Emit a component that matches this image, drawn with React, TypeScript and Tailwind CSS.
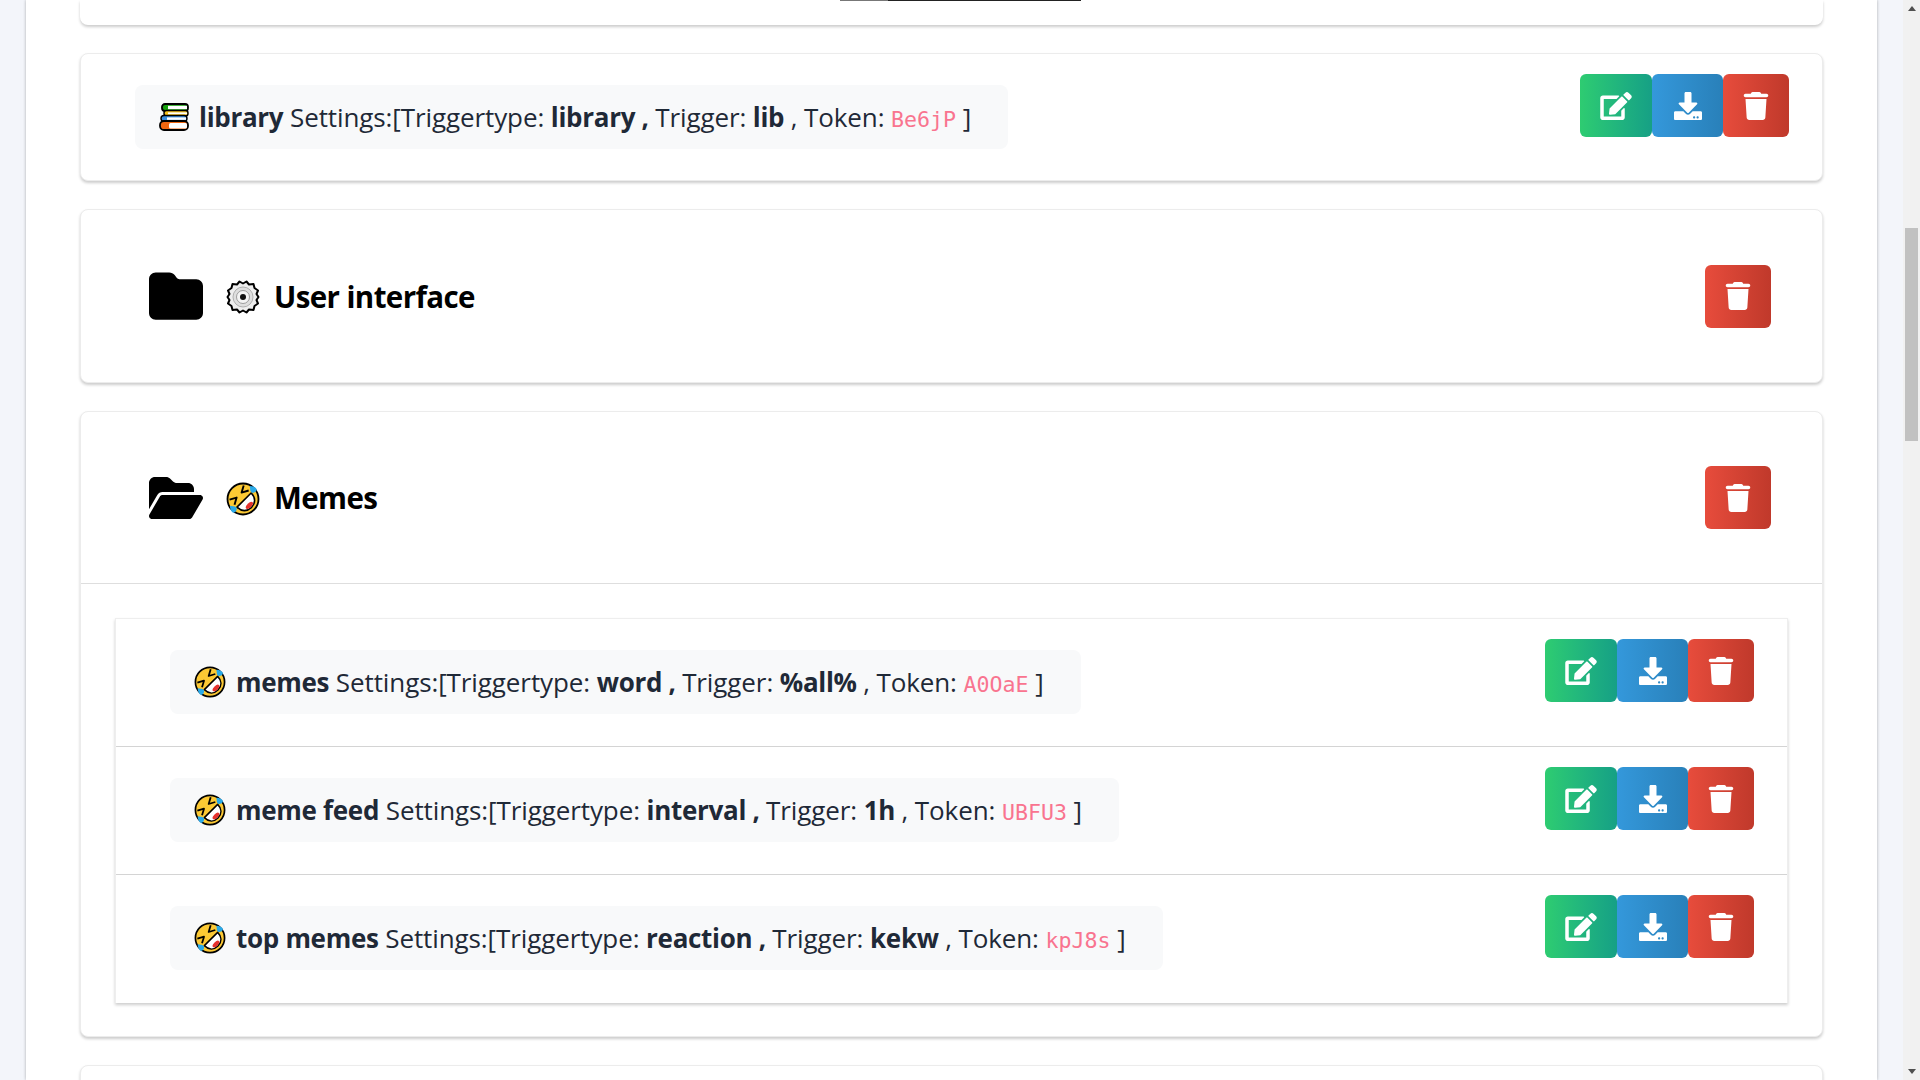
import type { ReactNode } from 'react';
import { FaDownload, FaEdit } from 'react-icons/fa';
import { FaFolder, FaFolderOpen, FaTrash } from 'react-icons/fa6';

function BooksEmoji() {
  return (
    <svg viewBox="0 0 30 28" className="w-[30px] h-[28px] shrink-0">
      <rect x="3" y="1" width="26" height="7" rx="3" fill="#16a30e" stroke="#000" strokeWidth="1.8" />
      <rect x="9" y="2.8" width="19" height="3.4" fill="#fff" />
      <rect x="5" y="7.5" width="24" height="5.5" rx="2.5" fill="#f6c21c" stroke="#000" strokeWidth="1.4" />
      <rect x="9" y="9.4" width="19" height="1.8" fill="#fff" />
      <rect x="2" y="12.5" width="26" height="6" rx="3" fill="#3a8fe0" stroke="#000" strokeWidth="1.4" />
      <rect x="8" y="14.4" width="19" height="2.4" fill="#fff" />
      <rect x="1" y="18" width="28" height="9" rx="4" fill="#f2660f" stroke="#000" strokeWidth="1.8" />
      <rect x="10" y="20" width="18" height="5.4" rx="1.5" fill="#fff" />
    </svg>
  );
}

function GearEmoji() {
  return (
    <svg viewBox="0 0 34 34" className="w-[34px] h-[34px] shrink-0">
      <path
        d="M13.5 1.5 17 3.5 20.5 1.5 23 4.5 27.5 4 28.5 8 32 10.5 30.5 14 32.5 17 30.5 20 32 23.5 28.5 26 27.5 30 23 29.5 20.5 32.5 17 30.5 13.5 32.5 11 29.5 6.5 30 5.5 26 2 23.5 3.5 20 1.5 17 3.5 14 2 10.5 5.5 8 6.5 4 11 4.5Z"
        fill="#eeeeee"
        stroke="#000"
        strokeWidth="2"
        strokeLinejoin="round"
      />
      <circle cx="17" cy="17" r="10" fill="#dedede" stroke="#b0b0b0" strokeWidth="1" />
      <circle cx="17" cy="17" r="6.5" fill="#f4f4f4" stroke="#8a8a8a" strokeWidth="0.8" />
      <circle cx="17" cy="17" r="3" fill="#111" />
    </svg>
  );
}

function RoflEmoji({ small }: { small?: boolean }) {
  return (
    <svg viewBox="0 0 34 34" className={small ? 'w-[32px] h-[32px] shrink-0' : 'w-[34px] h-[34px] shrink-0'}>
      <g transform="rotate(-45 17 17)">
        <circle cx="17" cy="17" r="15.5" fill="#fcc934" stroke="#000" strokeWidth="1.8" />
        <path d="M7 8 13.5 11.5 7 15" fill="none" stroke="#000" strokeWidth="1.9" strokeLinejoin="round" />
        <path d="M27 8 20.5 11.5 27 15" fill="none" stroke="#000" strokeWidth="1.9" strokeLinejoin="round" />
        <path d="M7 18.5H27C27 25 23 29 17 29S7 25 7 18.5Z" fill="#fff" stroke="#000" strokeWidth="1.6" strokeLinejoin="round" />
        <ellipse cx="17" cy="26" rx="4.5" ry="2.2" fill="#e5322d" />
        <path d="M31 12.5C33.5 15 34.5 18 33.5 20 31.5 21.5 28 20.5 27.7 18 27.5 16 30 14.5 31 12.5Z" fill="#29a9e8" />
        <path d="M3 12.5C0.5 15-0.5 18 0.5 20 2.5 21.5 6 20.5 6.3 18 6.5 16 4 14.5 3 12.5Z" fill="#29a9e8" />
      </g>
    </svg>
  );
}

function ActionButton({ kind }: { kind: 'edit' | 'download' | 'delete' }) {
  if (kind === 'edit') {
    return (
      <button className="flex h-[63px] w-[72px] items-center justify-center rounded-md bg-gradient-to-r from-[#2ecc71] to-[#16a085] text-[28px] text-white">
        <FaEdit className="w-[32px] h-[28px]" />
      </button>
    );
  }
  if (kind === 'download') {
    return (
      <button className="flex h-[63px] w-[71px] items-center justify-center rounded-md bg-gradient-to-r from-[#3498db] to-[#2980b9] text-[28px] text-white">
        <FaDownload />
      </button>
    );
  }
  return (
    <button className="flex h-[63px] w-[66px] items-center justify-center rounded-md bg-gradient-to-r from-[#e74c3c] to-[#c0392b] text-[28px] text-white">
      <FaTrash />
    </button>
  );
}

type Trigger = {
  icon: ReactNode;
  name: string;
  type: string;
  trigger: string;
  token: string;
};

function TriggerRow({ item, divider, single }: { item: Trigger; divider?: boolean; single?: boolean }) {
  return (
    <div className={`flex items-start justify-between pl-[54px] pr-[33px] pt-[20px] ${single ? 'h-[126px]' : 'h-[128px]'} ${divider ? 'border-b border-[#d4d4d4]' : ''}`}>
      <div className="mt-[11px] flex h-[64px] items-center rounded-lg bg-[#f8f9fa] pl-[24px] pr-[37px] text-[26px] tracking-[-0.1px] text-[#1f2937] whitespace-pre">
        {item.icon}
        <span className="ml-[10px]">
          <span className="font-bold tracking-[-0.3px]">{item.name}</span>
          <span> Settings:[Triggertype: </span>
          <span className="font-bold tracking-[-0.3px]">{item.type} , </span>
          <span>Trigger: </span>
          <span className="font-bold tracking-[-0.3px]">{item.trigger} </span>
          <span>, Token: </span>
          <code className="font-['DejaVu_Sans_Mono',monospace] text-[21.6px] tracking-normal text-[#f9748f]">{item.token}</code>
          <span> ]</span>
        </span>
      </div>
      <div className="flex">
        <ActionButton kind="edit" />
        <ActionButton kind="download" />
        <ActionButton kind="delete" />
      </div>
    </div>
  );
}

function FolderHeader({ open, icon, title, divider }: { open?: boolean; icon: ReactNode; title: string; divider?: boolean }) {
  return (
    <div className={`flex h-[172px] items-center justify-between pl-[68px] pr-[51px] ${divider ? 'border-b border-[#dedede]' : ''}`}>
      <div className="flex items-center">
        <span className="w-[54px] text-[54px] leading-none text-black">
          {open ? <FaFolderOpen className="w-[54px] h-[54px]" /> : <FaFolder />}
        </span>
        <span className="ml-[23px] mt-[2px]">{icon}</span>
        <span className="ml-[14px] mt-[2px] text-[29.5px] font-bold tracking-[-0.6px] text-black">{title}</span>
      </div>
      <ActionButton kind="delete" />
    </div>
  );
}

const card = 'rounded-lg border border-[#ececec] bg-white shadow-[0_2px_3px_rgba(0,0,0,0.2)]';

export default function App() {
  return (
    <div className="flex h-screen overflow-hidden bg-[#f3f5fa] font-['Open_Sans',sans-serif]">
      <div className="ml-[26px] h-full w-[1851px] shrink-0 bg-white px-[54px] shadow-[0_0_3px_rgba(0,0,0,0.3)]">
        <div className="relative mb-[28px] h-[25px] rounded-b-lg bg-white shadow-[0_2px_3px_rgba(0,0,0,0.2)]">
          <div className="absolute left-[760px] top-0 flex h-px w-[241px]">
            <div className="w-[48px] bg-[#777]" />
            <div className="flex-1 bg-[#222]" />
          </div>
        </div>

        <div className={`${card} mb-[28px]`}>
          <TriggerRow single item={{ icon: <BooksEmoji />, name: 'library', type: 'library', trigger: 'lib', token: 'Be6jP' }} />
        </div>

        <div className={`${card} mb-[28px]`}>
          <FolderHeader icon={<GearEmoji />} title="User interface" />
        </div>

        <div className={`${card} mb-[28px] pb-[33px]`}>
          <FolderHeader open divider icon={<RoflEmoji />} title="Memes" />
          <div className="mx-[34px] mt-[34px] border border-[#eee] border-b-0 bg-white shadow-[0_2px_3px_rgba(0,0,0,0.2)]">
            <TriggerRow divider item={{ icon: <RoflEmoji small />, name: 'memes', type: 'word', trigger: '%all%', token: 'A0OaE' }} />
            <TriggerRow divider item={{ icon: <RoflEmoji small />, name: 'meme feed', type: 'interval', trigger: '1h', token: 'UBFU3' }} />
            <TriggerRow item={{ icon: <RoflEmoji small />, name: 'top memes', type: 'reaction', trigger: 'kekw', token: 'kpJ8s' }} />
          </div>
        </div>

        <div className={`${card} h-[100px]`} />
      </div>

      <div className="ml-auto flex h-full w-[17px] shrink-0 flex-col items-center bg-[#f1f1f1]">
        <svg viewBox="0 0 8 5" className="mt-[6px] h-[5px] w-[8px] fill-[#505050]">
          <path d="M4 0 8 5H0Z" />
        </svg>
        <div className="mt-[217px] h-[213px] w-[13px] bg-[#c1c1c1]" />
        <svg viewBox="0 0 8 5" className="mt-auto mb-[6px] h-[5px] w-[8px] fill-[#505050]">
          <path d="M0 0H8L4 5Z" />
        </svg>
      </div>
    </div>
  );
}
